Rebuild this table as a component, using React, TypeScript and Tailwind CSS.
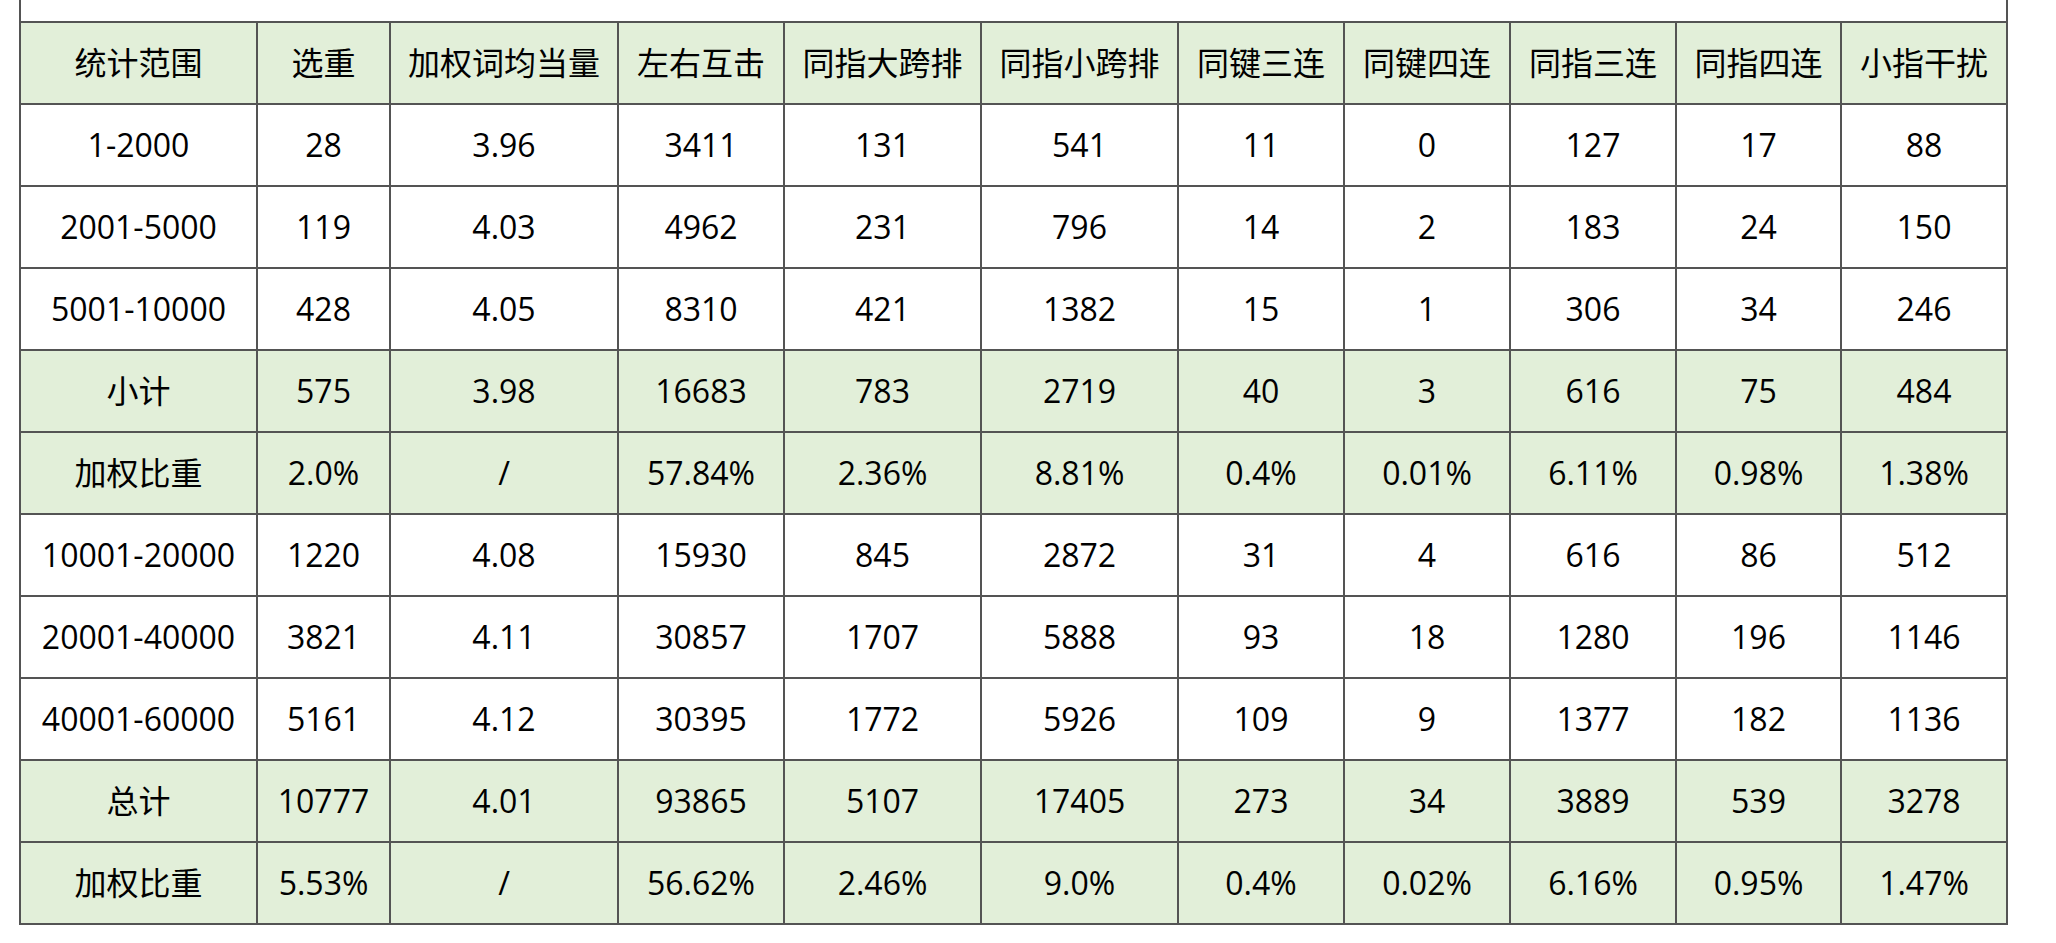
import React from "react";

const headers = [
  "统计范围",
  "选重",
  "加权词均当量",
  "左右互击",
  "同指大跨排",
  "同指小跨排",
  "同键三连",
  "同键四连",
  "同指三连",
  "同指四连",
  "小指干扰",
];

const colWidths = [237, 133, 228, 166, 197, 197, 166, 166, 166, 165, 166];

const rows: { cells: string[]; green?: boolean }[] = [
  { cells: ["1-2000", "28", "3.96", "3411", "131", "541", "11", "0", "127", "17", "88"] },
  { cells: ["2001-5000", "119", "4.03", "4962", "231", "796", "14", "2", "183", "24", "150"] },
  { cells: ["5001-10000", "428", "4.05", "8310", "421", "1382", "15", "1", "306", "34", "246"] },
  { cells: ["小计", "575", "3.98", "16683", "783", "2719", "40", "3", "616", "75", "484"], green: true },
  { cells: ["加权比重", "2.0%", "/", "57.84%", "2.36%", "8.81%", "0.4%", "0.01%", "6.11%", "0.98%", "1.38%"], green: true },
  { cells: ["10001-20000", "1220", "4.08", "15930", "845", "2872", "31", "4", "616", "86", "512"] },
  { cells: ["20001-40000", "3821", "4.11", "30857", "1707", "5888", "93", "18", "1280", "196", "1146"] },
  { cells: ["40001-60000", "5161", "4.12", "30395", "1772", "5926", "109", "9", "1377", "182", "1136"] },
  { cells: ["总计", "10777", "4.01", "93865", "5107", "17405", "273", "34", "3889", "539", "3278"], green: true },
  { cells: ["加权比重", "5.53%", "/", "56.62%", "2.46%", "9.0%", "0.4%", "0.02%", "6.16%", "0.95%", "1.47%"], green: true },
];

const cell = "h-[82px] border-2 border-[#545454] p-0 text-center align-middle whitespace-nowrap";

export default function App() {
  return (
    <div className="min-h-[943px] w-full bg-white text-black [font-family:'Open_Sans','Noto_Sans_CJK_SC',sans-serif]">
      <table className="ml-[19px] table-fixed border-collapse text-[32px] leading-none">
        <colgroup>
          {colWidths.map((w, i) => (
            <col key={i} style={{ width: w }} />
          ))}
        </colgroup>
        <tbody>
          <tr>
            <td colSpan={11} className="h-[22px] border-2 border-t-0 border-[#545454] p-0" />
          </tr>
          <tr className="bg-[#e2efd9]">
            {headers.map((h) => (
              <td key={h} className={cell}>
                {h}
              </td>
            ))}
          </tr>
          {rows.map((r, i) => (
            <tr key={i} className={r.green ? "bg-[#e2efd9]" : "bg-white"}>
              {r.cells.map((c, j) => (
                <td key={j} className={cell}>
                  {c}
                </td>
              ))}
            </tr>
          ))}
        </tbody>
      </table>
    </div>
  );
}
